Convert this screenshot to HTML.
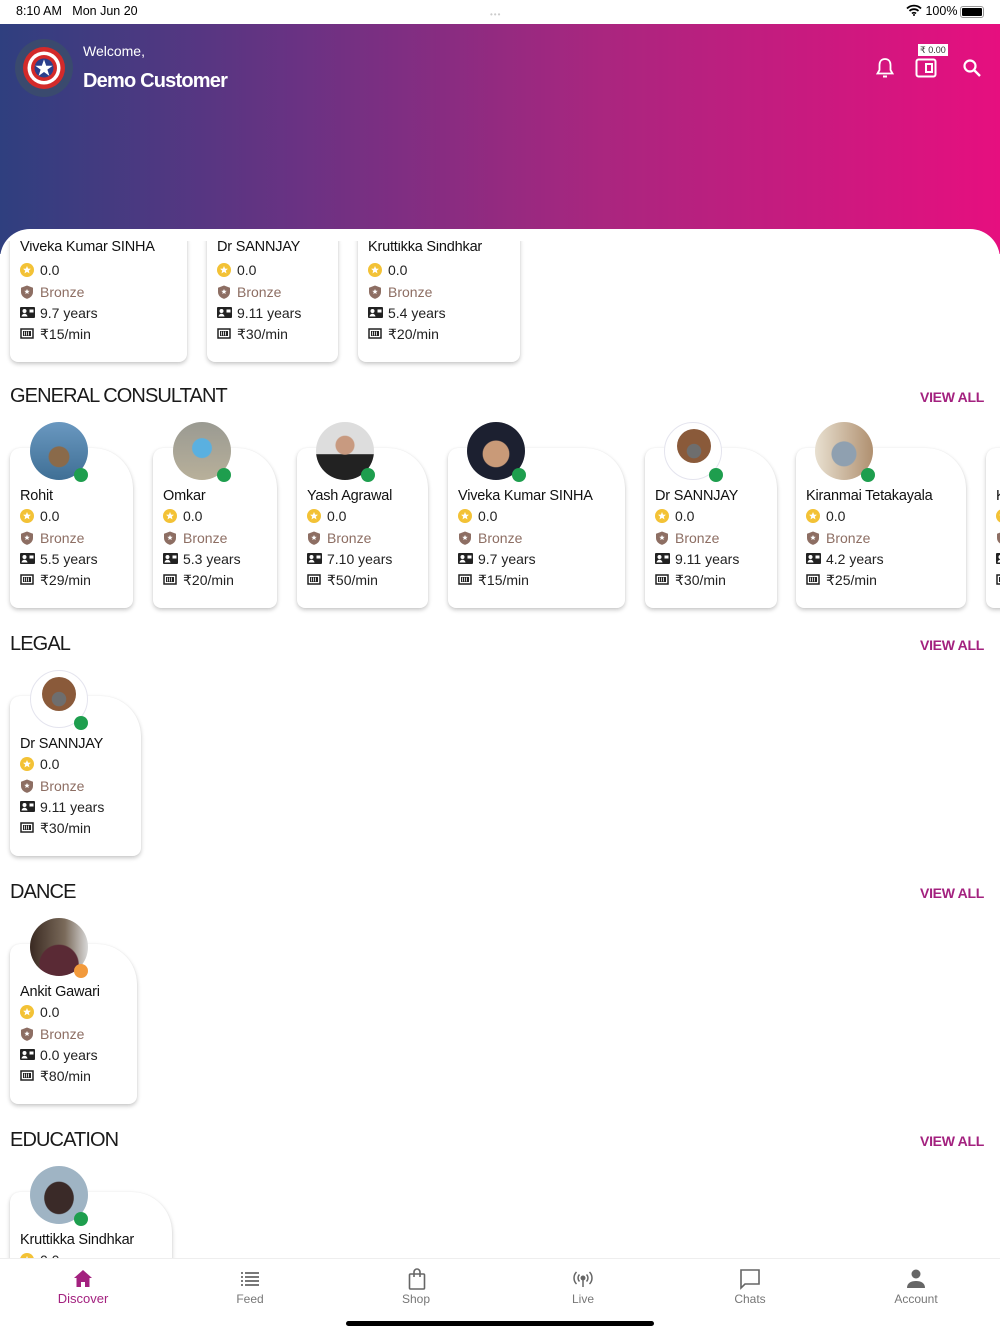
<!DOCTYPE html>
<html style="height:1334px;overflow:hidden"><head><meta charset="utf-8">
<style>
*{margin:0;padding:0;box-sizing:border-box}
body{width:1000px;height:1334px;overflow:hidden;background:#fff;font-family:"Liberation Sans",sans-serif;color:#222;position:relative}
.abs{position:absolute}
.status{position:absolute;top:0;left:0;width:1000px;height:24px;background:#fff;font-size:12.5px;color:#000}
.hdr{position:absolute;top:24px;left:0;width:1000px;height:230px;background:linear-gradient(90deg,#2f3f7f 0%,#6a3283 30%,#a9267f 60%,#e60f7f 100%)}
.panel{position:absolute;top:229px;left:0;width:1000px;height:1040px;background:#fff;border-radius:30px 30px 0 0}
.card{position:absolute;background:#fff;border-radius:10px 40px 8px 8px;box-shadow:0 2px 4px rgba(0,0,0,.22),0 0 1px rgba(0,0,0,.08);height:160px}
.nm{position:absolute;left:10px;top:40px;font-size:14.5px;white-space:nowrap;color:#111;letter-spacing:-.2px}
.r{position:absolute;left:10px;font-size:14px;white-space:nowrap;height:16px;line-height:16px;color:#222}
.r svg{position:absolute;left:0;top:1px}
.r span{position:absolute;left:20px;top:0}
.r1{top:60px}.r2{top:82px}.r3{top:103px}.r4{top:124px}
.r2 span{color:#8d6e63}
.av{position:absolute;width:58px;height:58px;border-radius:50%}
.dot{position:absolute;width:14px;height:14px;border-radius:50%;background:#1e9e4e}
.sec{position:absolute;left:10px;font-size:20px;color:#1a1a1a;letter-spacing:-.9px}
.va{position:absolute;right:16px;font-size:14px;font-weight:bold;color:#a3217f;letter-spacing:-.3px}
.tab{position:absolute;top:1258px;left:0;width:1000px;height:76px;background:#fff;border-top:1px solid #eee;z-index:5}
.ti{position:absolute;top:1292px;font-size:12px;color:#777;text-align:center;width:100px;z-index:6}
.z{z-index:6}
</style></head><body>

<div class="status">
 <div class="abs" style="left:16px;top:4px">8:10 AM&nbsp;&nbsp;&nbsp;Mon Jun 20</div>
 <div class="abs" style="left:490px;top:10px;width:20px;height:4px;color:#ccc;font-size:8px;letter-spacing:1px">•••</div>
 <div class="abs" style="left:906px;top:4px">
  <svg width="16" height="12" viewBox="0 0 16 12" style="vertical-align:-1px"><path d="M1 4.5a10 10 0 0 1 14 0M3.5 7a6.5 6.5 0 0 1 9 0M6 9.5a3 3 0 0 1 4 0" stroke="#000" stroke-width="1.8" fill="none"/><circle cx="8" cy="11" r="1" fill="#000"/></svg>
  100%</div>
 <div class="abs" style="left:960px;top:6px;width:24px;height:12px;border:1px solid #999;border-radius:3px;padding:1px"><div style="background:#000;width:100%;height:100%;border-radius:1px"></div></div>
</div>

<div class="hdr">
 <div class="abs" style="left:15px;top:15px;width:58px;height:58px;border-radius:50%;background:#3a4a6e"></div>
 <svg class="abs" style="left:22px;top:22px" width="44" height="44" viewBox="0 0 44 44"><circle cx="22" cy="22" r="21" fill="#d32a2a"/><circle cx="22" cy="22" r="16.5" fill="#fff"/><circle cx="22" cy="22" r="13" fill="#d32a2a"/><circle cx="22" cy="22" r="9.5" fill="#2a3f8c"/><path d="M22 13.5l2.2 6.2h6.5l-5.3 3.9 2 6.3-5.4-3.9-5.4 3.9 2-6.3-5.3-3.9h6.5z" fill="#fff"/></svg>
 <div class="abs" style="left:83px;top:19px;color:#fff;font-size:14px">Welcome,</div>
 <div class="abs" style="left:83px;top:46px;color:#fff;font-size:20px;letter-spacing:-.8px;font-weight:bold">Demo Customer</div>
 <svg class="abs" style="left:875px;top:33px" width="20" height="22" viewBox="0 0 20 22"><path d="M10 2c-3.5 0-5.5 2.5-5.5 6v5L2.5 16.5h15L15.5 13V8c0-3.5-2-6-5.5-6z" stroke="#fff" stroke-width="1.8" fill="none"/><path d="M8 19.5h4" stroke="#fff" stroke-width="2"/></svg>
 <div class="abs" style="left:918px;top:20px;background:#fff;color:#333;font-size:9px;padding:0 2px;line-height:12px">₹ 0.00</div>
 <svg class="abs" style="left:915px;top:34px" width="22" height="20" viewBox="0 0 22 20"><rect x="1.5" y="1.5" width="19" height="17" rx="2" stroke="#fff" stroke-width="2" fill="none"/><rect x="11" y="6" width="6" height="8" stroke="#fff" stroke-width="2" fill="none"/></svg>
 <svg class="abs" style="left:962px;top:34px" width="20" height="20" viewBox="0 0 20 20"><circle cx="8" cy="8" r="5.5" stroke="#fff" stroke-width="2.2" fill="none"/><path d="M12 12l6 6" stroke="#fff" stroke-width="2.4"/></svg>
</div>

<div class="panel"></div>

<svg width="0" height="0" style="position:absolute">
 <defs>
  <g id="st"><circle cx="7" cy="7" r="7" fill="#f3c236"/><path d="M7 3l1.1 2.6 2.8.2-2.1 1.8.7 2.8L7 8.9 4.5 10.4l.7-2.8-2.1-1.8 2.8-.2z" fill="#fff"/></g>
  <g id="sh"><path d="M7 0.5l6 2.2v4.3c0 3.5-2.6 5.8-6 6.9C3.6 12.8 1 10.5 1 7V2.7z" fill="#8d6e63"/><path d="M7 4l.8 1.8 1.9.1-1.5 1.2.5 1.9L7 8l-1.7 1 .5-1.9-1.5-1.2 1.9-.1z" fill="#fff"/></g>
  <g id="id"><rect x="0" y="1" width="15" height="11" rx="1" fill="#222"/><circle cx="4.5" cy="5" r="2" fill="#fff"/><path d="M1.5 10.5c.5-2 1.7-2.7 3-2.7s2.5.7 3 2.7z" fill="#fff"/><rect x="9.5" y="3.5" width="4" height="3" fill="#fff"/></g>
  <g id="pr"><rect x="1" y="2" width="12" height="9" stroke="#222" stroke-width="1.5" fill="none"/><rect x="3" y="4" width="8" height="5" fill="#222"/><path d="M4.5 4.5v4M6.5 4.5v4M8.5 4.5v4" stroke="#fff" stroke-width=".8"/></g>
 </defs>
</svg>

<div class="abs" style="left:0;top:241px;width:1000px;height:130px;overflow:hidden">
 <div class="card" style="left:10px;top:-39px;width:177px"><div class="nm" style="top:37px">Viveka Kumar SINHA</div>
  <div class="r r1"><svg width="14" height="14"><use href="#st"/></svg><span>0.0</span></div>
  <div class="r r2"><svg width="14" height="14"><use href="#sh"/></svg><span>Bronze</span></div>
  <div class="r r3"><svg width="15" height="14"><use href="#id"/></svg><span>9.7 years</span></div>
  <div class="r r4"><svg width="14" height="14"><use href="#pr"/></svg><span>₹15/min</span></div></div>
 <div class="card" style="left:207px;top:-39px;width:131px"><div class="nm" style="top:37px">Dr SANNJAY</div>
  <div class="r r1"><svg width="14" height="14"><use href="#st"/></svg><span>0.0</span></div>
  <div class="r r2"><svg width="14" height="14"><use href="#sh"/></svg><span>Bronze</span></div>
  <div class="r r3"><svg width="15" height="14"><use href="#id"/></svg><span>9.11 years</span></div>
  <div class="r r4"><svg width="14" height="14"><use href="#pr"/></svg><span>₹30/min</span></div></div>
 <div class="card" style="left:358px;top:-39px;width:162px"><div class="nm" style="top:37px">Kruttikka Sindhkar</div>
  <div class="r r1"><svg width="14" height="14"><use href="#st"/></svg><span>0.0</span></div>
  <div class="r r2"><svg width="14" height="14"><use href="#sh"/></svg><span>Bronze</span></div>
  <div class="r r3"><svg width="15" height="14"><use href="#id"/></svg><span>5.4 years</span></div>
  <div class="r r4"><svg width="14" height="14"><use href="#pr"/></svg><span>₹20/min</span></div></div>
</div>

<div class="sec" style="top:385px">GENERAL CONSULTANT</div>
<div class="va" style="top:389px">VIEW ALL</div>

<div class="card" style="left:10px;top:448px;width:123px"><div class="nm">Rohit</div>
 <div class="r r1"><svg width="14" height="14"><use href="#st"/></svg><span>0.0</span></div>
 <div class="r r2"><svg width="14" height="14"><use href="#sh"/></svg><span>Bronze</span></div>
 <div class="r r3"><svg width="15" height="14"><use href="#id"/></svg><span>5.5 years</span></div>
 <div class="r r4"><svg width="14" height="14"><use href="#pr"/></svg><span>₹29/min</span></div></div>
<div class="card" style="left:153px;top:448px;width:124px"><div class="nm">Omkar</div>
 <div class="r r1"><svg width="14" height="14"><use href="#st"/></svg><span>0.0</span></div>
 <div class="r r2"><svg width="14" height="14"><use href="#sh"/></svg><span>Bronze</span></div>
 <div class="r r3"><svg width="15" height="14"><use href="#id"/></svg><span>5.3 years</span></div>
 <div class="r r4"><svg width="14" height="14"><use href="#pr"/></svg><span>₹20/min</span></div></div>
<div class="card" style="left:297px;top:448px;width:131px"><div class="nm">Yash Agrawal</div>
 <div class="r r1"><svg width="14" height="14"><use href="#st"/></svg><span>0.0</span></div>
 <div class="r r2"><svg width="14" height="14"><use href="#sh"/></svg><span>Bronze</span></div>
 <div class="r r3"><svg width="15" height="14"><use href="#id"/></svg><span>7.10 years</span></div>
 <div class="r r4"><svg width="14" height="14"><use href="#pr"/></svg><span>₹50/min</span></div></div>
<div class="card" style="left:448px;top:448px;width:177px"><div class="nm">Viveka Kumar SINHA</div>
 <div class="r r1"><svg width="14" height="14"><use href="#st"/></svg><span>0.0</span></div>
 <div class="r r2"><svg width="14" height="14"><use href="#sh"/></svg><span>Bronze</span></div>
 <div class="r r3"><svg width="15" height="14"><use href="#id"/></svg><span>9.7 years</span></div>
 <div class="r r4"><svg width="14" height="14"><use href="#pr"/></svg><span>₹15/min</span></div></div>
<div class="card" style="left:645px;top:448px;width:132px"><div class="nm">Dr SANNJAY</div>
 <div class="r r1"><svg width="14" height="14"><use href="#st"/></svg><span>0.0</span></div>
 <div class="r r2"><svg width="14" height="14"><use href="#sh"/></svg><span>Bronze</span></div>
 <div class="r r3"><svg width="15" height="14"><use href="#id"/></svg><span>9.11 years</span></div>
 <div class="r r4"><svg width="14" height="14"><use href="#pr"/></svg><span>₹30/min</span></div></div>
<div class="card" style="left:796px;top:448px;width:170px"><div class="nm">Kiranmai Tetakayala</div>
 <div class="r r1"><svg width="14" height="14"><use href="#st"/></svg><span>0.0</span></div>
 <div class="r r2"><svg width="14" height="14"><use href="#sh"/></svg><span>Bronze</span></div>
 <div class="r r3"><svg width="15" height="14"><use href="#id"/></svg><span>4.2 years</span></div>
 <div class="r r4"><svg width="14" height="14"><use href="#pr"/></svg><span>₹25/min</span></div></div>
<div class="card" style="left:986px;top:448px;width:130px;overflow:hidden"><div class="nm">K</div>
 <div class="r r1"><svg width="14" height="14"><use href="#st"/></svg></div>
 <div class="r r2"><svg width="14" height="14"><use href="#sh"/></svg></div>
 <div class="r r3"><svg width="15" height="14"><use href="#id"/></svg></div>
 <div class="r r4"><svg width="14" height="14"><use href="#pr"/></svg></div></div>

<div class="av" style="left:30px;top:422px;background:radial-gradient(circle at 50% 60%,#8a6a4a 0 22%,transparent 24%),linear-gradient(180deg,#6a98c0,#3f6f95)"></div><div class="dot" style="left:74px;top:468px"></div>
<div class="av" style="left:173px;top:422px;background:radial-gradient(circle at 50% 45%,#5ab0e0 0 22%,transparent 24%),linear-gradient(180deg,#9a9a92,#b8b09a)"></div><div class="dot" style="left:217px;top:468px"></div>
<div class="av" style="left:316px;top:422px;background:radial-gradient(circle at 50% 40%,#c89a80 0 20%,transparent 22%),linear-gradient(180deg,#ddd 0 55%,#222 56%)"></div><div class="dot" style="left:361px;top:468px"></div>
<div class="av" style="left:467px;top:422px;background:radial-gradient(circle at 50% 55%,#c99a78 0 30%,transparent 32%),#1c2030"></div><div class="dot" style="left:512px;top:468px"></div>
<div class="av" style="left:664px;top:422px;background:#fff;border:1px solid #e4e4ee"><div style="position:absolute;left:12px;top:6px;width:34px;height:34px;border-radius:50%;background:radial-gradient(circle at 50% 65%,#6e6e6e 0 25%,transparent 27%),#8a5a3a"></div></div><div class="dot" style="left:709px;top:468px"></div>
<div class="av" style="left:815px;top:422px;background:radial-gradient(circle at 50% 55%,#8fa0b0 0 28%,transparent 30%),linear-gradient(90deg,#e8e0d0,#b09070)"></div><div class="dot" style="left:861px;top:468px"></div>

<div class="sec" style="top:633px">LEGAL</div>
<div class="va" style="top:637px">VIEW ALL</div>
<div class="card" style="left:10px;top:696px;width:131px"><div class="nm">Dr SANNJAY</div>
 <div class="r r1"><svg width="14" height="14"><use href="#st"/></svg><span>0.0</span></div>
 <div class="r r2"><svg width="14" height="14"><use href="#sh"/></svg><span>Bronze</span></div>
 <div class="r r3"><svg width="15" height="14"><use href="#id"/></svg><span>9.11 years</span></div>
 <div class="r r4"><svg width="14" height="14"><use href="#pr"/></svg><span>₹30/min</span></div></div>
<div class="av" style="left:30px;top:670px;background:#fff;border:1px solid #e4e4ee"><div style="position:absolute;left:11px;top:6px;width:34px;height:34px;border-radius:50%;background:radial-gradient(circle at 50% 65%,#6e6e6e 0 25%,transparent 27%),#8a5a3a"></div></div><div class="dot" style="left:74px;top:716px"></div>

<div class="sec" style="top:881px">DANCE</div>
<div class="va" style="top:885px">VIEW ALL</div>
<div class="card" style="left:10px;top:944px;width:127px"><div class="nm">Ankit Gawari</div>
 <div class="r r1"><svg width="14" height="14"><use href="#st"/></svg><span>0.0</span></div>
 <div class="r r2"><svg width="14" height="14"><use href="#sh"/></svg><span>Bronze</span></div>
 <div class="r r3"><svg width="15" height="14"><use href="#id"/></svg><span>0.0 years</span></div>
 <div class="r r4"><svg width="14" height="14"><use href="#pr"/></svg><span>₹80/min</span></div></div>
<div class="av" style="left:30px;top:918px;background:radial-gradient(circle at 50% 80%,#5a2a35 0 35%,transparent 37%),linear-gradient(90deg,#3a2a22,#7a6a5a 60%,#d8d8d8)"></div><div class="dot" style="left:74px;top:964px;background:#f29a3c"></div>

<div class="sec" style="top:1129px">EDUCATION</div>
<div class="va" style="top:1133px">VIEW ALL</div>
<div class="card" style="left:10px;top:1192px;width:162px;height:70px;border-radius:10px 40px 0 0"><div class="nm">Kruttikka Sindhkar</div>
 <div class="r r1"><svg width="14" height="14"><use href="#st"/></svg><span>0.0</span></div></div>
<div class="av" style="left:30px;top:1166px;background:radial-gradient(ellipse at 50% 55%,#3a2a28 0 35%,transparent 37%),#9fb4c4"></div><div class="dot" style="left:74px;top:1212px"></div>

<div class="tab"></div>
<svg class="abs z" style="left:74px;top:1270px" width="18" height="17" viewBox="0 0 18 17"><path d="M9 0L0 8h2.5v9h4.5v-5h4v5h4.5V8H18z" fill="#a3217f"/></svg>
<div class="ti" style="left:33px;color:#a3217f;font-size:13px;top:1291px">Discover</div>
<svg class="abs z" style="left:241px;top:1272px" width="18" height="14" viewBox="0 0 18 14"><path d="M0 1h2M4 1h14M0 5h2M4 5h14M0 9h2M4 9h14M0 13h2M4 13h14" stroke="#666" stroke-width="1.8"/></svg>
<div class="ti" style="left:200px">Feed</div>
<svg class="abs z" style="left:408px;top:1268px" width="18" height="22" viewBox="0 0 18 22"><rect x="1.5" y="6" width="15" height="15" rx="1" stroke="#666" stroke-width="1.6" fill="none"/><path d="M6 9V4a3 3 0 0 1 6 0v5" stroke="#666" stroke-width="1.6" fill="none"/></svg>
<div class="ti" style="left:366px">Shop</div>
<svg class="abs z" style="left:572px;top:1270px" width="22" height="18" viewBox="0 0 22 18"><circle cx="11" cy="8" r="2.5" fill="#666"/><path d="M11 10v7M7.5 4.5a5 5 0 0 0 0 7M14.5 4.5a5 5 0 0 1 0 7M4.5 2a8.5 8.5 0 0 0 0 12M17.5 2a8.5 8.5 0 0 1 0 12" stroke="#666" stroke-width="1.5" fill="none"/></svg>
<div class="ti" style="left:533px">Live</div>
<svg class="abs z" style="left:739px;top:1268px" width="22" height="22" viewBox="0 0 22 22"><path d="M2 2h18v14H6l-4 4z" stroke="#666" stroke-width="1.6" fill="none"/></svg>
<div class="ti" style="left:700px">Chats</div>
<svg class="abs z" style="left:907px;top:1269px" width="18" height="19" viewBox="0 0 18 19"><circle cx="9" cy="5" r="4.5" fill="#666"/><path d="M0 19c0-5 4-7 9-7s9 2 9 7z" fill="#666"/></svg>
<div class="ti" style="left:866px">Account</div>
<div class="abs z" style="left:346px;top:1321px;width:308px;height:5px;border-radius:3px;background:#000"></div>
</body></html>
